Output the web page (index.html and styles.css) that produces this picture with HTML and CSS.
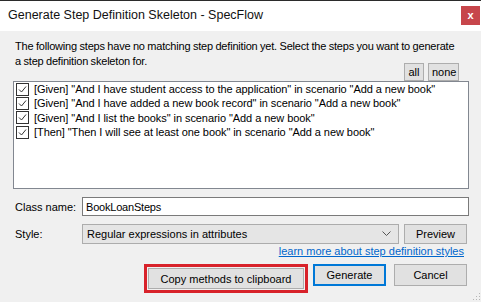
FILE: index.html
```html
<!DOCTYPE html>
<html lang="en">
<head>
    <meta charset="UTF-8">
    <meta name="viewport" content="width=device-width, initial-scale=1.0">
    <title>Generate Step Definition Skeleton - SpecFlow</title>
    <link rel="stylesheet" href="styles.css">
</head>
<body>
    <div class="dialog">
        <header class="titlebar">
            <h1>Generate Step Definition Skeleton - SpecFlow</h1>
            <button class="btn-close" aria-label="close">x</button>
        </header>
        <main class="content">
            <p class="intro">The following steps have no matching step definition yet. Select the steps you want to generate a step definition skeleton for.</p>
            <div class="pick">
                <button class="btn btn-small">all</button>
                <button class="btn btn-small">none</button>
            </div>
            <ul class="step-list">
                <li><span class="check"><svg width="13" height="13" viewBox="0 0 13 13"><rect x="0.5" y="0.5" width="12" height="12" fill="#fff" stroke="#333"/><polyline points="3,6.5 5.5,9 10,3.5" fill="none" stroke="#333" stroke-width="1"/></svg></span>[Given] "And I have student access to the application" in scenario "Add a new book"</li>
                <li><span class="check"><svg width="13" height="13" viewBox="0 0 13 13"><rect x="0.5" y="0.5" width="12" height="12" fill="#fff" stroke="#333"/><polyline points="3,6.5 5.5,9 10,3.5" fill="none" stroke="#333" stroke-width="1"/></svg></span>[Given] "And I have added a new book record" in scenario "Add a new book"</li>
                <li><span class="check"><svg width="13" height="13" viewBox="0 0 13 13"><rect x="0.5" y="0.5" width="12" height="12" fill="#fff" stroke="#333"/><polyline points="3,6.5 5.5,9 10,3.5" fill="none" stroke="#333" stroke-width="1"/></svg></span>[Given] "And I list the books" in scenario "Add a new book"</li>
                <li><span class="check"><svg width="13" height="13" viewBox="0 0 13 13"><rect x="0.5" y="0.5" width="12" height="12" fill="#fff" stroke="#333"/><polyline points="3,6.5 5.5,9 10,3.5" fill="none" stroke="#333" stroke-width="1"/></svg></span>[Then] "Then I will see at least one book" in scenario "Add a new book"</li>
            </ul>
            <div class="field">
                <label for="className">Class name:</label>
                <div class="input">BookLoanSteps</div>
            </div>
            <div class="field">
                <label>Style:</label>
                <div class="select">
                    <span>Regular expressions in attributes</span>
                    <svg width="9" height="6" viewBox="0 0 9 6"><polyline points="0.5,0.5 4.5,4.5 8.5,0.5" fill="none" stroke="#555"/></svg>
                </div>
                <button class="btn btn-preview">Preview</button>
            </div>
            <div class="more"><a href="#">learn more about step definition styles</a></div>
            <div class="actions">
                <span class="mark"><button class="btn btn-copy">Copy methods to clipboard</button></span>
                <button class="btn btn-default">Generate</button>
                <button class="btn">Cancel</button>
            </div>
        </main>
        <div class="grip"></div>
    </div>
</body>
</html>
```

FILE: styles.css
```css
*{padding:0; margin:0; list-style:none; box-sizing:border-box;}
html,body{width:481px; height:302px; overflow:hidden;}
body{font-family:"Liberation Sans", Arial, sans-serif; font-size:11px; color:#000; background:#f0f0f0;}

.dialog{position:relative; width:100%; height:100%; background:#f0f0f0;}

/* title bar */
.titlebar{
    height:31px; background:#fff; border-top:1px solid #2b2b2b;
    display:flex; align-items:center; justify-content:space-between;
    padding:0 1px 2px 8px;
}
.titlebar h1{font-weight:normal; font-size:12.5px; color:#111;}
.btn-close{
    width:19px; height:19px; border:none; background:#c7464b; color:#fff;
    font-family:"Liberation Sans", Arial, sans-serif; font-size:11px; font-weight:bold;
    line-height:17px;
}

/* content */
.content{padding:8px 12px 0 13px;}
.intro{line-height:15px; padding-left:2px; padding-right:10px; letter-spacing:-0.2px; word-spacing:-0.3px;}
.pick{display:flex; justify-content:flex-end; gap:4px; margin-top:-6px; padding-right:10px;}

.btn{
    font-family:"Liberation Sans", Arial, sans-serif; font-size:11px; color:#000;
    background:#e1e1e1; border:1px solid #adadad; height:23px;
}
.btn-small{height:18px; padding:0 3px;}
.btn-small:first-child{width:20px;}
.btn-small:last-child{width:31px;}

.step-list{
    background:#fff; border:1px solid #828790; height:108px; padding-top:0;
}
.step-list li{display:flex; align-items:center; height:14.3px; padding-left:2px; white-space:nowrap; letter-spacing:-0.07px;}
.check{display:inline-flex; width:18px;}
.check svg{display:block;}

.field{display:flex; align-items:center; margin-top:8px;}
.field label{width:69px; padding-left:2px;}
.input{
    flex:1; height:19px; background:#fff; border:1px solid #7a7a7a;
    display:flex; align-items:center; padding-left:3px; letter-spacing:-0.2px;
}
.select{
    width:317px; height:20px; background:#e5e5e5; border:1px solid #acacac;
    display:flex; align-items:center; justify-content:space-between; padding:0 7px 0 4px;
}
.btn-preview{width:63px; height:20px; margin-left:5px;}

.more{text-align:right; padding-right:5px; line-height:13px; margin-top:1px;}
.more a{color:#0066cc;}

.actions{display:flex; justify-content:flex-end; align-items:flex-start; margin-top:6px; padding-right:2px;}
.mark{border:3px solid #d8222a; padding:1px; margin-right:5px; display:flex;}
.btn-copy{width:156px; height:21px;}
.btn-default{width:73px; height:22px; border:2px solid #0078d7; margin-right:8px;}
.actions>.btn:last-child{width:73px; height:22px;}

/* resize grip */
.grip{
    position:absolute; right:1px; bottom:2px; width:8px; height:8px;
    background:
        radial-gradient(circle, #b5b5b5 0.8px, transparent 1px) 0 0/3px 3px;
    clip-path:polygon(100% 0, 100% 100%, 0 100%);
}
```
